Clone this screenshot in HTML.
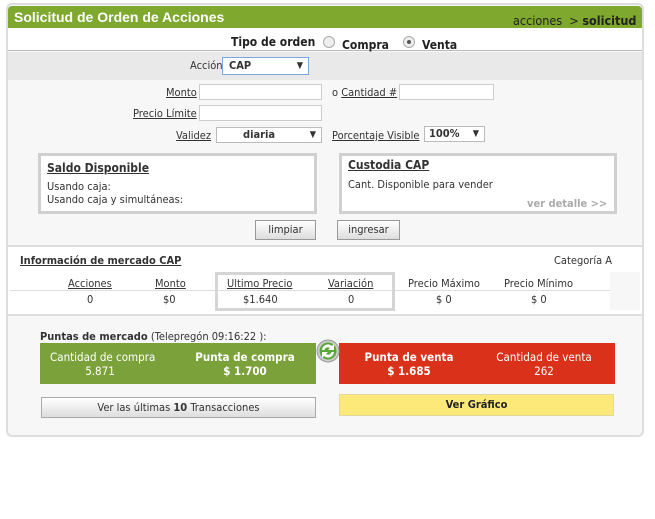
<!DOCTYPE html>
<html><head><meta charset="utf-8"><style>
*{margin:0;padding:0;box-sizing:border-box}
body{width:655px;height:519px;background:#fff;font-family:"DejaVu Sans Condensed","Liberation Sans",sans-serif;font-size:11px;color:#333;position:relative;overflow:hidden}
.a{position:absolute;white-space:nowrap}
u{text-decoration:underline}
.inp{position:absolute;background:#fff;border:1px solid #ccc}
.sel{position:absolute;background:#fff;border:1px solid #bbb;font-weight:bold;font-size:11px;padding-left:6px;line-height:14px}
.sel i{position:absolute;right:5px;top:0;font-style:normal;font-size:9px}
.box{position:absolute;border:3px solid #d0d0d0;background:#fff}
.btn{position:absolute;border:1px solid #999;background:linear-gradient(#fff,#ddd);text-align:center;line-height:17px}
</style></head><body>
<div class="a" style="left:6px;top:3px;width:638px;height:434px;border:2px solid #ddd;border-radius:6px;background:#f7f7f7"></div>
<div class="a" style="left:8px;top:6px;width:634px;height:22px;background:#7ea82e;border-radius:4px 4px 0 0"></div>
<div class="a" style="left:14px;top:9px;color:#fff;font-weight:bold;font-size:14px;font-family:'Liberation Sans',sans-serif">Solicitud de Orden de Acciones</div>
<div class="a" style="left:513px;top:13px;color:#222;font-size:12.5px">acciones &nbsp;&gt; <b>solicitud</b></div>
<div class="a" style="left:8px;top:28px;width:634px;height:23px;background:#fff;border-bottom:1px solid #bbb"></div>
<div class="a" style="left:231px;top:35px;font-weight:bold;font-size:12px;color:#222">Tipo de orden</div>
<div class="a" style="left:323px;top:36px;width:12px;height:12px;border-radius:50%;border:1px solid #aaa;background:#eee"></div>
<div class="a" style="left:342px;top:38px;font-weight:bold;font-size:12px;color:#222">Compra</div>
<div class="a" style="left:403px;top:36px;width:12px;height:12px;border-radius:50%;border:1px solid #aaa;background:#eee"></div>
<div class="a" style="left:407px;top:40px;width:4px;height:4px;border-radius:50%;background:#555"></div>
<div class="a" style="left:422px;top:38px;font-weight:bold;font-size:12px;color:#222">Venta</div>
<div class="a" style="left:8px;top:52px;width:634px;height:28px;background:#e9e9e9"></div>
<div class="a" style="left:190px;top:59px">Acción</div>
<div class="sel" style="left:222px;top:57px;width:87px;height:18px;border:1px solid #7aa7e0;line-height:16px">CAP<i>▼</i></div>
<div class="a" style="left:166px;top:86px"><u>Monto</u></div>
<div class="inp" style="left:199px;top:84px;width:123px;height:16px"></div>
<div class="a" style="left:332px;top:86px">o <u>Cantidad #</u></div>
<div class="inp" style="left:399px;top:84px;width:95px;height:16px"></div>
<div class="a" style="left:133px;top:107px"><u>Precio Límite</u></div>
<div class="inp" style="left:199px;top:105px;width:123px;height:16px"></div>
<div class="a" style="left:176px;top:129px"><u>Validez</u></div>
<div class="sel" style="left:216px;top:127px;width:106px;height:16px;padding-left:26px">diaria<i>▼</i></div>
<div class="a" style="left:332px;top:129px"><u>Porcentaje Visible</u></div>
<div class="sel" style="left:424px;top:126px;width:61px;height:16px;padding-left:4px">100%<i>▼</i></div>
<div class="box" style="left:38px;top:153px;width:279px;height:61px"></div>
<div class="a" style="left:47px;top:161px;font-weight:bold;font-size:12px"><u>Saldo Disponible</u></div>
<div class="a" style="left:47px;top:180px">Usando caja:</div>
<div class="a" style="left:47px;top:193px">Usando caja y simultáneas:</div>
<div class="box" style="left:339px;top:153px;width:278px;height:61px"></div>
<div class="a" style="left:348px;top:158px;font-weight:bold;font-size:12px"><u>Custodia CAP</u></div>
<div class="a" style="left:348px;top:178px">Cant. Disponible para vender</div>
<div class="a" style="left:527px;top:197px;color:#aaa;font-weight:bold">ver detalle &gt;&gt;</div>
<div class="btn" style="left:255px;top:220px;width:61px;height:20px">limpiar</div>
<div class="btn" style="left:337px;top:220px;width:63px;height:20px">ingresar</div>
<div class="a" style="left:8px;top:245px;width:634px;height:71px;background:#fff;border-top:2px solid #ddd;border-bottom:2px solid #ddd"></div>
<div class="a" style="left:20px;top:254px;font-weight:bold;font-size:11px"><u>Información de mercado CAP</u></div>
<div class="a" style="left:554px;top:254px">Categoría A</div>
<div class="a" style="left:610px;top:272px;width:30px;height:38px;background:#f7f7f7"></div>
<div class="a" style="left:10px;top:290px;width:600px;height:1px;background:#ddd"></div>
<div class="a" style="left:215px;top:272px;width:180px;height:39px;border:3px solid #d5d5d5"></div>
<div class="a" style="left:68px;top:277px"><u>Acciones</u></div>
<div class="a" style="left:155px;top:277px"><u>Monto</u></div>
<div class="a" style="left:227px;top:277px"><u>Ultimo Precio</u></div>
<div class="a" style="left:328px;top:277px"><u>Variación</u></div>
<div class="a" style="left:408px;top:277px">Precio Máximo</div>
<div class="a" style="left:504px;top:277px">Precio Mínimo</div>
<div class="a" style="left:87px;top:293px">0</div>
<div class="a" style="left:163px;top:293px">$0</div>
<div class="a" style="left:243px;top:293px">$1.640</div>
<div class="a" style="left:348px;top:293px">0</div>
<div class="a" style="left:436px;top:293px">$ 0</div>
<div class="a" style="left:531px;top:293px">$ 0</div>
<div class="a" style="left:40px;top:330px"><b>Puntas de mercado</b> (Telepregón 09:16:22 ):</div>
<div class="a" style="left:40px;top:343px;width:276px;height:41px;background:#7ba23a;color:#fff;font-size:11.5px">
<div class="a" style="left:10px;top:7px;width:100px;text-align:center;line-height:14px">Cantidad de compra<br>5.871</div>
<div class="a" style="left:150px;top:7px;width:110px;text-align:center;line-height:14px;font-weight:bold">Punta de compra<br>$ 1.700</div></div>
<div class="a" style="left:339px;top:343px;width:276px;height:41px;background:#d9311a;color:#fff;font-size:11.5px">
<div class="a" style="left:15px;top:7px;width:110px;text-align:center;line-height:14px;font-weight:bold">Punta de venta<br>$ 1.685</div>
<div class="a" style="left:150px;top:7px;width:110px;text-align:center;line-height:14px">Cantidad de venta<br>262</div></div>
<svg class="a" style="left:316px;top:339px" width="24" height="24" viewBox="0 0 24 24"><circle cx="12" cy="12" r="11" fill="#ccc" stroke="#999"/><circle cx="12" cy="12" r="8.5" fill="#5aa83a"/><path d="M6 11a6 6 0 0 1 10-4l2-2v6h-6l2-2a3.5 3.5 0 0 0-5.5 2z" fill="#fff"/><path d="M18 13a6 6 0 0 1-10 4l-2 2v-6h6l-2 2a3.5 3.5 0 0 0 5.5-2z" fill="#fff"/></svg>
<div class="btn" style="left:41px;top:397px;width:275px;height:21px;line-height:19px;border-color:#aaa">Ver las últimas <b>10</b> Transacciones</div>
<div class="a" style="left:339px;top:394px;width:275px;height:22px;background:#fde97a;border:1px solid #e0d9a0;text-align:center;line-height:20px;font-weight:bold;color:#222">Ver Gráfico</div>
</body></html>
